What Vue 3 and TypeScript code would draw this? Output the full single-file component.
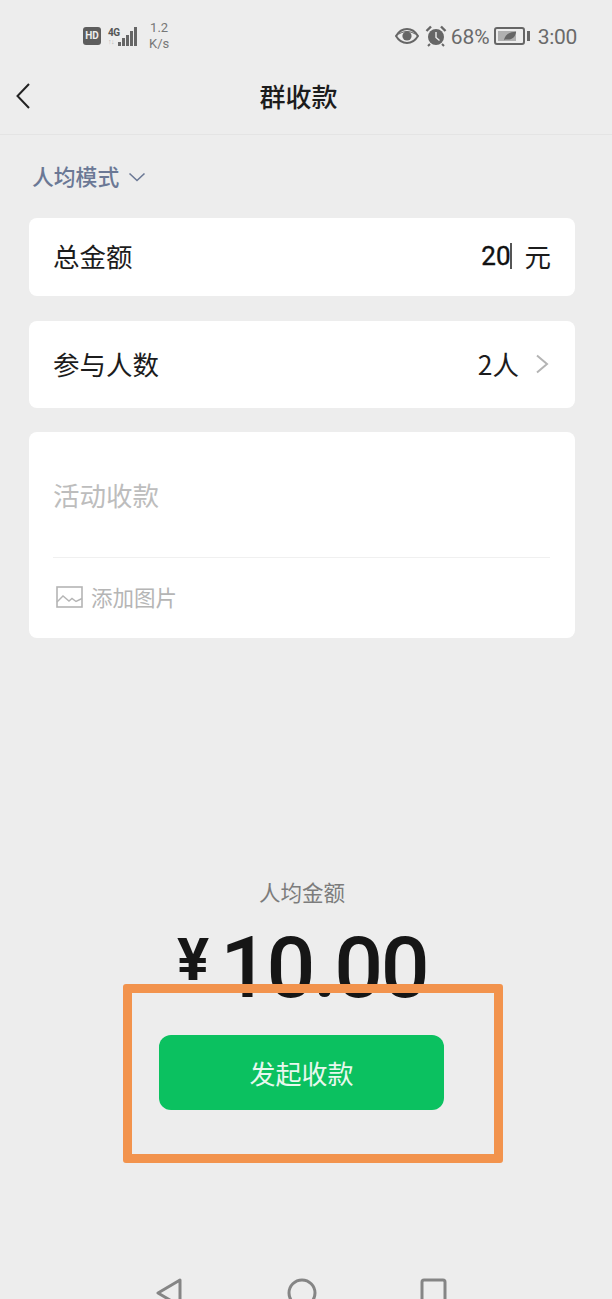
<script setup lang="ts">
const bars = [4, 8, 11, 15, 19]
</script>

<template>
  <div class="page">
    <div class="status">
      <div class="status-left">
        <span class="hd">HD</span>
        <div class="signal">
          <div class="net"><span class="net-g">4G</span><span class="net-d">↑↓</span></div>
          <div class="bars">
            <i v-for="b in bars" :key="b" :style="{ height: b + 'px' }"></i>
          </div>
        </div>
        <div class="speed"><span>1.2</span><span>K/s</span></div>
      </div>
      <div class="status-right">
        <svg class="eye" width="24" height="18" viewBox="0 0 24 18">
          <path d="M1 9c3-5 7-7 11-7s8 2 11 7c-3 5-7 7-11 7S4 14 1 9z" fill="none" stroke="#666" stroke-width="2" />
          <circle cx="12" cy="9" r="4.6" fill="#666" />
          <path d="M1 9c3-2.500 7-4.500 11-4.500S20 6.500 23 9" fill="none" stroke="#666" stroke-width="1" />
        </svg>
        <svg class="alarm" width="22" height="22" viewBox="0 0 22 22">
          <circle cx="11" cy="12" r="8" fill="#666" />
          <path d="M11 7v5.500l3.500 3" fill="none" stroke="#ededed" stroke-width="1.400" />
          <path d="M1.500 6L6 1.500M20.500 6L16 1.500" stroke="#666" stroke-width="2.400" />
          <path d="M5 19l-2 2M17 19l2 2" stroke="#666" stroke-width="2" />
        </svg>
        <span class="pct">68%</span>
        <div class="battery">
          <div class="cell">
            <div class="charge"></div>
            <svg class="leaf" width="14" height="12" viewBox="0 0 16 12">
              <path d="M1 11c1-6 6-10 14-10-1 6-4 9-10 9-2 0-3 0-4 1z" fill="#666" />
            </svg>
          </div>
          <span class="tip"></span>
        </div>
        <span class="clock">3:00</span>
      </div>
    </div>

    <div class="nav">
      <svg class="back" width="16" height="28" viewBox="0 0 16 28">
        <path d="M14 2L2.500 14 14 26" fill="none" stroke="#222" stroke-width="2" />
      </svg>
      <span class="nav-title">群收款</span>
    </div>

    <div class="content">
      <div class="mode">
        <span>人均模式</span>
        <svg width="18" height="10" viewBox="0 0 18 10">
          <path d="M1.500 1.500L9 8.500l7.500-7" fill="none" stroke="#6b7895" stroke-width="1.600" />
        </svg>
      </div>

      <div class="card row amount-row">
        <span>总金额</span>
        <div class="row-value">
          <span class="amount">20<i class="caret"></i></span>
          <span>元</span>
        </div>
      </div>

      <div class="card row people-row">
        <span>参与人数</span>
        <div class="row-value people">
          <span>2人</span>
          <svg width="14" height="20" viewBox="0 0 14 20">
            <path d="M2 1.500L12 10 2 18.500" fill="none" stroke="#b4b4b4" stroke-width="2" />
          </svg>
        </div>
      </div>

      <div class="card note">
        <div class="note-text">活动收款</div>
        <div class="note-image">
          <svg width="28" height="24" viewBox="0 0 28 24">
            <rect x="1" y="2" width="25" height="20" fill="none" stroke="#b5b5b5" stroke-width="1.600" />
            <path d="M1 17l6-6 6 5 3-2.500 4 3 6-3" fill="none" stroke="#b5b5b5" stroke-width="1.400" />
          </svg>
          <span>添加图片</span>
        </div>
      </div>
    </div>

    <div class="summary">
      <div class="summary-label">人均金额</div>
      <div class="summary-value"><span class="yen">¥</span><span class="sum">10.00</span></div>
    </div>

    <div class="highlight">
      <button class="submit">发起收款</button>
    </div>

    <div class="sysnav">
      <svg width="28" height="32" viewBox="0 0 28 32">
        <path d="M25 2L3 15l22 13z" fill="none" stroke="#858585" stroke-width="3" stroke-linejoin="round" />
      </svg>
      <svg width="30" height="32" viewBox="0 0 30 32">
        <circle cx="15" cy="15" r="13" fill="none" stroke="#858585" stroke-width="3" />
      </svg>
      <svg class="square" width="28" height="32" viewBox="0 0 28 32">
        <rect x="2" y="2" width="23" height="26" rx="2" fill="none" stroke="#858585" stroke-width="3" />
      </svg>
    </div>
  </div>
</template>

<style scoped>
.page {
  width: 612px;
  height: 1299px;
  overflow: hidden;
  background: #ededed;
  font-family: "Noto Sans CJK SC", "Noto Sans", sans-serif;
  color: #1c1c1c;
}

.status {
  height: 70px;
  display: flex;
  justify-content: space-between;
  align-items: center;
  padding: 2px 35px 0 83px;
  box-sizing: border-box;
  color: #666;
}

.status-left,
.status-right {
  display: flex;
  align-items: center;
}

.hd {
  width: 18px;
  height: 18px;
  border-radius: 3px;
  background: #5d5d5d;
  color: #eee;
  font: 700 10px/18px "Roboto", sans-serif;
  text-align: center;
}

.signal {
  display: flex;
  align-items: flex-end;
  margin-left: 7px;
}

.net {
  display: flex;
  flex-direction: column;
  width: 10px;
  font: 700 10px/11px "Roboto", sans-serif;
  letter-spacing: -0.5px;
}

.net-g {
  color: #555;
}

.net-d {
  color: #b5b5b5;
  font-size: 7px;
  line-height: 8px;
}

.bars {
  display: flex;
  align-items: flex-end;
  gap: 1px;
}

.bars i {
  display: block;
  width: 3px;
  background: #666;
}

.speed {
  display: flex;
  flex-direction: column;
  align-items: center;
  margin-left: 12px;
  font: 400 13px/16px "Roboto", sans-serif;
  color: #777;
}

.status-right {
  gap: 5px;
}

.eye {
  margin-right: 1px;
}

.alarm {
  margin-right: -1px;
}

.pct,
.clock {
  font: 400 21px/26px "Roboto", sans-serif;
  color: #6a6a6a;
  margin-top: 2px;
}

.pct {
  margin-right: -1px;
}

.battery {
  display: flex;
  align-items: center;
  gap: 2px;
}

.cell {
  position: relative;
  width: 23px;
  height: 10px;
  border: 2px solid #666;
  border-radius: 3px;
  padding: 2px;
}

.charge {
  width: 78%;
  height: 100%;
  background: #b0b0b0;
}

.leaf {
  position: absolute;
  left: 7px;
  top: 1px;
}

.tip {
  width: 3px;
  height: 10px;
  background: #666;
}

.clock {
  margin-left: 3px;
  letter-spacing: -0.3px;
}

.nav {
  height: 64px;
  display: flex;
  align-items: center;
  justify-content: center;
  position: relative;
  border-bottom: 1px solid #e4e4e4;
}

.back {
  position: absolute;
  left: 15px;
  top: 12px;
}

.nav-title {
  font-size: 26px;
  font-weight: 500;
  margin: 0 0 14px -15px;
}

.content {
  padding: 0 37px 0 29px;
}

.mode {
  height: 83px;
  box-sizing: border-box;
  display: flex;
  align-items: center;
  gap: 9px;
  padding: 0 0 3px 3px;
  color: #6b7895;
  font-size: 21.8px;
  font-weight: 500;
}

.mode svg {
  margin-top: 3px;
}

.card {
  background: #fff;
  border-radius: 8px;
  font-size: 26.5px;
}

.row {
  display: flex;
  justify-content: space-between;
  align-items: center;
  padding: 0 24px 4px 24px;
  box-sizing: border-box;
}

.amount-row {
  height: 78px;
}

.people-row {
  height: 87px;
  margin-top: 25px;
  padding-bottom: 2px;
}

.row-value {
  display: flex;
  align-items: center;
  gap: 13px;
}

.people {
  gap: 16px;
  margin-right: 2px;
}

.amount {
  display: flex;
  align-items: center;
  margin-top: 2px;
  font-family: "Roboto", sans-serif;
  font-size: 26px;
  color: #111;
  -webkit-text-stroke: 0.4px #111;
}

.caret {
  display: block;
  width: 2px;
  height: 26px;
  background: #555;
  margin-left: -1px;
}

.note {
  height: 206px;
  margin-top: 24px;
  padding: 0 25px 0 24px;
  box-sizing: border-box;
}

.note-text {
  height: 126px;
  line-height: 126px;
  color: #bdbdbd;
  border-bottom: 1px solid #f0f0f0;
  box-sizing: border-box;
}

.note-image {
  display: flex;
  align-items: center;
  gap: 7px;
  height: 80px;
  box-sizing: border-box;
  padding: 0 0 3px 3px;
  color: #b5b5b5;
  font-size: 21.5px;
}

.summary {
  margin-top: 239px;
  padding-right: 8px;
  text-align: center;
}

.summary-label {
  font-size: 21.5px;
  line-height: 30px;
  color: #7c7c7c;
}

.summary-value {
  display: flex;
  justify-content: center;
  align-items: flex-start;
  gap: 11px;
  margin-top: 17px;
  height: 90px;
  font-family: "Roboto", sans-serif;
  font-weight: 500;
  color: #161616;
}

.yen {
  font-size: 60px;
  line-height: 60px;
  font-weight: 700;
  margin-top: 6px;
}

.sum {
  font-size: 86px;
  line-height: 90px;
  letter-spacing: -2.5px;
  margin-top: -1px;
}

.highlight {
  position: relative;
  width: 380px;
  height: 179px;
  margin: -30px 0 0 123px;
  box-sizing: border-box;
  border: 9px solid #f2934d;
  border-radius: 3px;
  padding: 42px 0 0 27px;
}

.submit {
  display: block;
  width: 285px;
  height: 75px;
  border: none;
  border-radius: 12px;
  background: #0bc160;
  color: #e8f8ee;
  font-family: inherit;
  font-size: 26px;
  padding: 0;
}

.sysnav {
  display: flex;
  margin: 115px 0 0 155px;
  gap: 104px;
}

.square {
  margin-left: -1px;
}
</style>

<style>
body {
  background: #ededed;
}
</style>
